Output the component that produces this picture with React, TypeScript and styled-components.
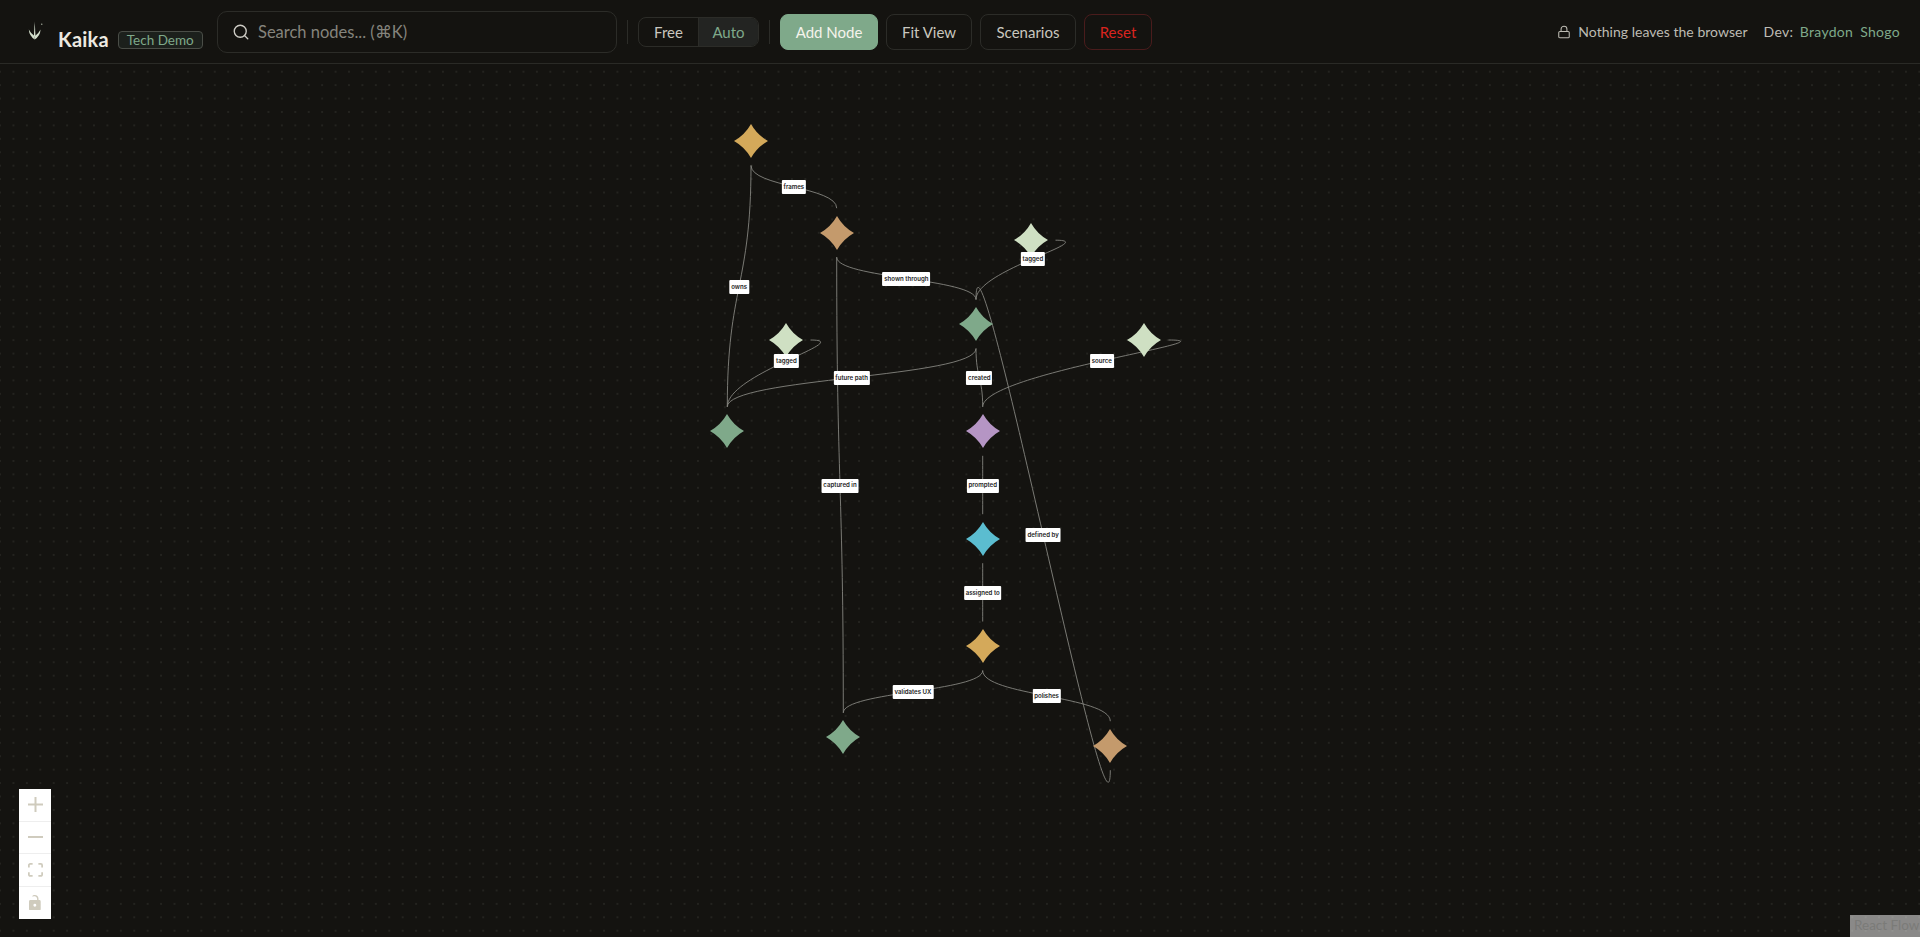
import React from "react";
import styled, { createGlobalStyle } from "styled-components";
import { Search, Lock } from "lucide-react";

const UI_FONT = `Lato, "Noto Sans", sans-serif`;
const ZOOM = 0.6715;
const BG = "#141310";

const Global = createGlobalStyle`
  html, body { margin: 0; padding: 0; height: 100%; background: ${BG}; }
  body { font-family: ${UI_FONT}; overflow: hidden; }
  #root { height: 100%; }
`;

const Page = styled.div`
  width: 100%;
  height: 100vh;
  display: flex;
  flex-direction: column;
  background: ${BG};
  color: #d9d7cf;
`;

const Header = styled.header`
  height: 64px;
  flex: none;
  box-sizing: border-box;
  display: flex;
  align-items: center;
  padding: 0 20px 0 28px;
  border-bottom: 1px solid #2a2a26;
`;

const Brand = styled.div`
  display: flex;
  align-items: flex-start;
  width: 174px;
  height: 40px;
  flex: none;
  margin-right: 15px;
`;

const LogoMark = styled.svg`
  width: 16px;
  height: 20px;
  margin: 9px 14px 0 0;
  flex: none;
`;

const BrandName = styled.span`
  font-size: 20px;
  font-weight: 700;
  color: #ece9e1;
  letter-spacing: 0.2px;
  line-height: 24px;
  margin-top: 15px;
`;

const Badge = styled.span`
  box-sizing: border-box;
  margin: 19px 0 0 9px;
  height: 18px;
  padding: 0 8px;
  display: flex;
  align-items: center;
  border: 1px solid #4a4d47;
  border-radius: 4px;
  background: #1c201c;
  color: #7fa98a;
  font-size: 13.5px;
  white-space: nowrap;
`;

const SearchBox = styled.label`
  box-sizing: border-box;
  width: 400px;
  height: 42px;
  flex: none;
  display: flex;
  align-items: center;
  gap: 8px;
  padding: 0 14px;
  border: 1px solid #2c2c28;
  border-radius: 10px;
  color: #cfcdc6;
`;

const SearchInput = styled.input`
  flex: 1;
  min-width: 0;
  padding: 0;
  background: none;
  border: 0;
  outline: 0;
  font: 400 16.5px ${UI_FONT};
  color: #d9d7cf;
  &::placeholder { color: #85847d; opacity: 1; }
`;

const Divider = styled.span`
  width: 1px;
  height: 24px;
  background: #2c2c28;
  flex: none;
  margin: 0 10px;
`;

const Toggle = styled.div`
  display: flex;
  height: 30px;
  flex: none;
  box-sizing: border-box;
  border: 1px solid #2c2c28;
  border-radius: 8px;
  overflow: hidden;
`;

const ToggleOption = styled.button<{ $active?: boolean; $w: number }>`
  width: ${(p) => p.$w}px;
  border: 0;
  padding: 0;
  font: 400 15px ${UI_FONT};
  background: ${(p) => (p.$active ? "#232422" : "transparent")};
  color: ${(p) => (p.$active ? "#7fa98a" : "#c9c7bf")};
  & + & { border-left: 1px solid #2c2c28; }
`;

const Actions = styled.div`
  display: flex;
  gap: 8px;
  flex: none;
`;

const ActionButton = styled.button<{ $w: number; $tone?: "primary" | "danger" }>`
  box-sizing: border-box;
  width: ${(p) => p.$w}px;
  height: 36px;
  padding: 0;
  border-radius: 8px;
  font: 400 15px ${UI_FONT};
  border: 1px solid
    ${(p) => (p.$tone === "primary" ? "#7fa98a" : p.$tone === "danger" ? "#4a1c1c" : "#2c2c28")};
  background: ${(p) => (p.$tone === "primary" ? "#7fa98a" : "transparent")};
  color: ${(p) => (p.$tone === "primary" ? "#f5f3ec" : p.$tone === "danger" ? "#d9241f" : "#c9c7bf")};
`;

const Right = styled.div`
  margin-left: auto;
  display: flex;
  align-items: center;
  font-size: 14px;
  color: #bdbbb3;
  white-space: nowrap;
`;

const Privacy = styled.span`
  display: flex;
  align-items: center;
  gap: 7px;
  margin-right: 16px;
  letter-spacing: 0.03px;
`;

const DevLabel = styled.span`
  margin-right: 6.5px;
  letter-spacing: 0.3px;
`;

const DevLink = styled.a`
  color: #7fa98a;
  letter-spacing: 0.3px;
  & + & { margin-left: 7px; }
`;

const Canvas = styled.main`
  position: relative;
  flex: 1;
  overflow: hidden;
  background-color: ${BG};
  background-image: radial-gradient(circle at center, #2e2e29 0.6px, transparent 0.8px);
  background-size: 13.43px 13.43px;
  background-position: -6.7px 1px;
`;

const EdgeLayer = styled.svg`
  position: absolute;
  left: 0;
  top: -64px;
  width: 1920px;
  height: 937px;
  pointer-events: none;
`;

const EdgePath = styled.path`
  fill: none;
  stroke: #85857f;
  stroke-width: 0.9;
`;

const NodeShape = styled.svg<{ $x: number; $y: number }>`
  position: absolute;
  left: ${(p) => p.$x - 18}px;
  top: ${(p) => p.$y - 64 - 18}px;
  width: 36px;
  height: 36px;
`;

const EdgeLabel = styled.span<{ $x: number; $y: number }>`
  position: absolute;
  left: ${(p) => p.$x}px;
  top: ${(p) => p.$y - 64 + 0.5}px;
  transform: translate(-50%, -50%);
  height: 14px;
  display: flex;
  align-items: center;
  padding: 0 1.8px;
  background: #fff;
  border-radius: 1px;
  color: #222;
  font: 600 6.1px/1 Inter, Lato, sans-serif;
  white-space: nowrap;
`;

const Controls = styled.div`
  position: absolute;
  left: 19px;
  bottom: 18px;
  width: 32px;
  background: #fff;
  display: flex;
  flex-direction: column;
`;

const ControlButton = styled.button`
  box-sizing: border-box;
  height: 32.5px;
  padding: 0;
  border: 0;
  border-bottom: 1px solid #eee;
  background: #fff;
  display: flex;
  align-items: center;
  justify-content: center;
  &:last-child { border-bottom: 0; }
`;

const ControlIcon = styled.svg<{ $w: number }>`
  width: ${(p) => p.$w}px;
  height: auto;
  fill: #cfcbbd;
`;

const Attribution = styled.a`
  position: absolute;
  right: 0;
  bottom: 0;
  width: 70px;
  height: 22px;
  box-sizing: border-box;
  padding: 4px 4px;
  background: rgba(255, 255, 255, 0.5);
  color: #7b7b78;
  font: 400 13.5px/1 Lato, sans-serif;
  white-space: nowrap;
`;

type Pt = [number, number];
type Side = "bottom" | "right";

const NODES: { id: string; c: Pt; fill: string }[] = [
  { id: "a", c: [751, 141], fill: "#d4a95a" },
  { id: "b", c: [836.7, 232.7], fill: "#c49a6c" },
  { id: "t1", c: [1031, 240.2], fill: "#cfe0c3" },
  { id: "g1", c: [976, 324], fill: "#7fa98a" },
  { id: "s", c: [1144, 340], fill: "#cfe0c3" },
  { id: "t2", c: [786, 340], fill: "#cfe0c3" },
  { id: "g2", c: [727.3, 431.3], fill: "#7fa98a" },
  { id: "p", c: [982.7, 431.3], fill: "#b595c4" },
  { id: "cy", c: [982.7, 538.7], fill: "#5bbdd0" },
  { id: "g", c: [982.7, 646], fill: "#d4a95a" },
  { id: "g3", c: [843.3, 737.3], fill: "#7fa98a" },
  { id: "tan", c: [1110.3, 745.7], fill: "#c49a6c" },
];

const EDGES: { from: string; to: string; label: string; side?: Side }[] = [
  { from: "a", to: "b", label: "frames" },
  { from: "a", to: "g2", label: "owns" },
  { from: "b", to: "g1", label: "shown through" },
  { from: "b", to: "g3", label: "captured in" },
  { from: "t1", to: "g1", label: "tagged", side: "right" },
  { from: "t2", to: "g2", label: "tagged", side: "right" },
  { from: "g1", to: "g2", label: "future path" },
  { from: "g1", to: "p", label: "created" },
  { from: "s", to: "p", label: "source", side: "right" },
  { from: "p", to: "cy", label: "prompted" },
  { from: "cy", to: "g", label: "assigned to" },
  { from: "g", to: "g3", label: "validates UX" },
  { from: "g", to: "tan", label: "polishes" },
  { from: "tan", to: "g1", label: "defined by" },
];

const HANDLE = 24.5;

// Same control-point rule as a flow-chart bezier edge, evaluated in flow units.
const controlOffset = (d: number) =>
  d >= 0 ? 0.5 * d : 0.25 * 25 * Math.sqrt(-d / ZOOM) * ZOOM;

const nodeAt = (id: string) => NODES.find((n) => n.id === id)!;

const layoutEdge = (e: (typeof EDGES)[number]) => {
  const from = nodeAt(e.from).c;
  const to = nodeAt(e.to).c;
  const s: Pt =
    e.side === "right" ? [from[0] + HANDLE, from[1]] : [from[0], from[1] + HANDLE];
  const t: Pt = [to[0], to[1] - HANDLE];
  const c1: Pt =
    e.side === "right"
      ? [s[0] + controlOffset(t[0] - s[0]), s[1]]
      : [s[0], s[1] + controlOffset(t[1] - s[1])];
  const c2: Pt = [t[0], t[1] - controlOffset(t[1] - s[1])];
  return {
    d: `M${s[0]},${s[1]} C${c1[0]},${c1[1]} ${c2[0]},${c2[1]} ${t[0]},${t[1]}`,
    x: s[0] * 0.125 + c1[0] * 0.375 + c2[0] * 0.375 + t[0] * 0.125,
    y: s[1] * 0.125 + c1[1] * 0.375 + c2[1] * 0.375 + t[1] * 0.125,
  };
};

const DIAMOND = "M18 1 Q24.1 11.9 35 18 Q24.1 24.1 18 35 Q11.9 24.1 1 18 Q11.9 11.9 18 1 Z";

export default function App() {
  const edges = EDGES.map((e) => ({ ...e, ...layoutEdge(e) }));
  return (
    <Page>
      <Global />
      <Header>
        <Brand>
          <LogoMark viewBox="0 0 16 20" fill="#d5e0cd">
            <path d="M6.7 0.4 L7.5 15.5 L5.9 15.5 Z" />
            <path d="M6.7 18.6 Q1.2 15 0.8 8.6 Q3 13 6.7 15.2 Z" />
            <path d="M6.7 18.6 Q12.2 15 12.6 8.6 Q10.4 13 6.7 15.2 Z" />
            <circle cx="13.8" cy="3.2" r="0.6" />
          </LogoMark>
          <BrandName>Kaika</BrandName>
          <Badge>Tech Demo</Badge>
        </Brand>
        <SearchBox>
          <Search size={18} strokeWidth={1.8} />
          <SearchInput placeholder="Search nodes... (⌘K)" />
        </SearchBox>
        <Divider />
        <Toggle>
          <ToggleOption $w={59}>Free</ToggleOption>
          <ToggleOption $w={60} $active>Auto</ToggleOption>
        </Toggle>
        <Divider />
        <Actions>
          <ActionButton $w={98} $tone="primary">Add Node</ActionButton>
          <ActionButton $w={86}>Fit View</ActionButton>
          <ActionButton $w={96}>Scenarios</ActionButton>
          <ActionButton $w={68} $tone="danger">Reset</ActionButton>
        </Actions>
        <Right>
          <Privacy>
            <Lock size={14} strokeWidth={1.8} />
            Nothing leaves the browser
          </Privacy>
          <DevLabel>Dev:</DevLabel>
          <DevLink>Braydon</DevLink>
          <DevLink>Shogo</DevLink>
        </Right>
      </Header>
      <Canvas>
        <EdgeLayer viewBox="0 0 1920 937">
          {edges.map((e) => (
            <EdgePath key={e.from + e.to} d={e.d} />
          ))}
        </EdgeLayer>
        {NODES.map((n) => (
          <NodeShape key={n.id} $x={n.c[0]} $y={n.c[1]} viewBox="0 0 36 36">
            <path d={DIAMOND} fill={n.fill} />
          </NodeShape>
        ))}
        {edges.map((e) => (
          <EdgeLabel key={e.from + e.to} $x={e.x} $y={e.y}>
            {e.label}
          </EdgeLabel>
        ))}
        <Controls>
          <ControlButton>
            <ControlIcon $w={15} viewBox="0 0 32 32">
              <path d="M32 18.133H18.133V32h-4.266V18.133H0v-4.266h13.867V0h4.266v13.867H32z" />
            </ControlIcon>
          </ControlButton>
          <ControlButton>
            <ControlIcon $w={15} viewBox="0 0 32 5">
              <path d="M0 0h32v4.2H0z" />
            </ControlIcon>
          </ControlButton>
          <ControlButton>
            <ControlIcon $w={15} viewBox="0 0 32 30">
              <path d="M3.692 4.63c0-.53.4-.938.939-.938h5.215V0H4.708C2.13 0 0 2.054 0 4.63v5.216h3.692V4.631zM27.354 0h-5.2v3.692h5.17c.53 0 .984.4.984.939v5.215H32V4.631A4.624 4.624 0 0027.354 0zm.954 24.83c0 .532-.4.94-.939.94h-5.215v3.768h5.215c2.577 0 4.631-2.13 4.631-4.707v-5.139h-3.692v5.139zm-23.677.94c-.531 0-.939-.4-.939-.94v-5.138H0v5.139c0 2.577 2.13 4.707 4.708 4.707h5.138V25.77H4.631z" />
            </ControlIcon>
          </ControlButton>
          <ControlButton>
            <ControlIcon $w={12} viewBox="0 0 25 32">
              <path d="M21.333 10.667H19.81V7.619C19.81 3.429 16.38 0 12.19 0c-1.127 0-2.6.305-3.352.762C7.631 1.371 6.4 3.2 7.02 3.2c.8 0 2.9-1.067 5.17-.762 1.676.305 4.725 2.59 4.725 5.181v3.048H3.048A3.056 3.056 0 000 13.714v15.238A3.056 3.056 0 003.048 32h18.285a3.056 3.056 0 003.048-3.048V13.714a3.056 3.056 0 00-3.048-3.047zM12.19 24.533a3.056 3.056 0 01-3.047-3.047 3.056 3.056 0 013.047-3.048 3.056 3.056 0 013.048 3.048 3.056 3.056 0 01-3.048 3.047z" />
            </ControlIcon>
          </ControlButton>
        </Controls>
        <Attribution>React Flow</Attribution>
      </Canvas>
    </Page>
  );
}
